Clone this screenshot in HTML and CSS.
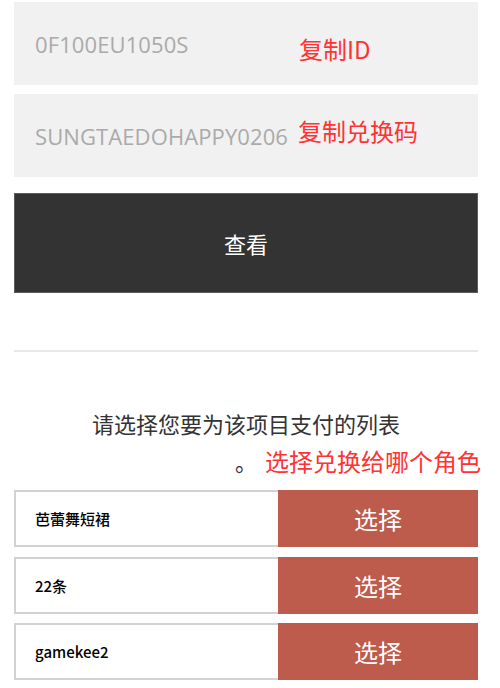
FILE: index.html
```html
<!DOCTYPE html>
<html lang="zh-CN">
<head>
<meta charset="utf-8">
<link rel="stylesheet" href="styles.css">
</head>
<body>
<div class="page">
  <div class="field">
    <span class="field-text">0F100EU1050S</span>
    <span class="note note-id">复制ID</span>
  </div>
  <div class="field field-second">
    <span class="field-text">SUNGTAEDOHAPPY0206</span>
    <span class="note note-code">复制兑换码</span>
  </div>
  <button class="view-btn">查看</button>
  <div class="divider"></div>
  <div class="prompt">
    <p class="prompt-text">请选择您要为该项目支付的列表<br>。</p>
    <span class="note note-role">选择兑换给哪个角色</span>
  </div>
  <div class="list">
    <div class="row">
      <div class="row-name">芭蕾舞短裙</div>
      <button class="row-btn">选择</button>
    </div>
    <div class="row">
      <div class="row-name">22条</div>
      <button class="row-btn">选择</button>
    </div>
    <div class="row">
      <div class="row-name">gamekee2</div>
      <button class="row-btn">选择</button>
    </div>
  </div>
</div>
</body>
</html>
```

FILE: styles.css
```css
* { box-sizing: border-box; }
html, body { margin: 0; padding: 0; background: #fff; }
body {
  font-family: "Open Sans", "Noto Sans CJK SC", sans-serif;
}
.page {
  width: 464px;
  margin-left: 14px;
  padding-top: 2px;
}
.field {
  position: relative;
  height: 83px;
  background: #f1f1f1;
  display: flex;
  align-items: center;
  padding-left: 21px;
}
.field-second { margin-top: 9px; }
.field-text {
  font-size: 22px;
  color: #aaaaaa;
  letter-spacing: 0.1px;
}
.note {
  position: absolute;
  font-family: "Noto Sans CJK SC", "Open Sans", sans-serif;
  font-size: 24px;
  line-height: 24px;
  color: #ff3333;
  white-space: nowrap;
}
.note-id { left: 285px; top: 35px; }
.note-code { left: 284px; top: 25px; }
.view-btn {
  display: block;
  width: 100%;
  height: 100px;
  margin-top: 16px;
  background: #333333;
  border: 1px solid #5c5c5c;
  color: #fff;
  font-family: "Noto Sans CJK SC", sans-serif;
  font-size: 22px;
  padding: 0;
}
.divider {
  height: 2px;
  background: #e8e8e8;
  margin-top: 57px;
}
.prompt {
  position: relative;
  margin-top: 52px;
}
.prompt-text {
  margin: 0;
  text-align: center;
  font-family: "Noto Sans CJK SC", sans-serif;
  font-size: 22px;
  line-height: 38px;
  color: #333;
}
.note-role { left: 251px; top: 45px; }
.list {
  margin-top: 10px;
  display: flex;
  flex-direction: column;
  gap: 9.5px;
}
.row {
  display: flex;
  height: 57px;
}
.row-name {
  flex: 1;
  border: 2px solid #d2d2d2;
  border-right: none;
  display: flex;
  align-items: center;
  padding-left: 19px;
  font-family: "Noto Sans CJK SC", "Open Sans", sans-serif;
  font-size: 15px;
  font-weight: 500;
  color: #000;
}
.row-btn {
  width: 200px;
  border: none;
  background: #bd5b4c;
  color: #fff;
  font-family: "Noto Sans CJK SC", sans-serif;
  font-size: 24px;
  padding: 0;
}
```
